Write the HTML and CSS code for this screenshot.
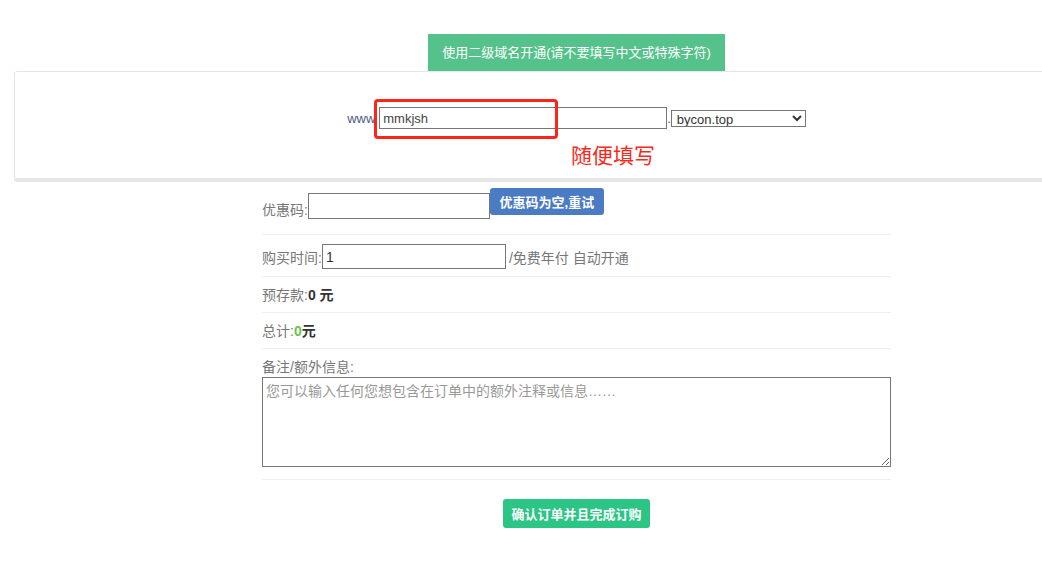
FILE: index.html
```html
<!DOCTYPE html>
<html lang="zh-CN">
<head>
    <meta charset="UTF-8">
    <title>开通</title>
    <link rel="stylesheet" href="styles.css">
</head>
<body>
    <div class="page">
        <div class="domain-tab">使用二级域名开通(请不要填写中文或特殊字符)</div>
        <section class="domain-panel">
            <div class="domain-row">
                <span class="www">www.</span>
                <span class="sub-wrap">
                    <input type="text" class="sub-input" value="mmkjsh">
                    <span class="mark-box"></span>
                </span>
                <span class="dot">.</span>
                <select class="suffix">
                    <option>bycon.top</option>
                </select>
            </div>
            <div class="note">随便填写</div>
        </section>

        <form class="order-form">
            <div class="row row-coupon">
                <label>优惠码:</label>
                <input type="text" class="coupon-input">
                <button type="button" class="btn-blue">优惠码为空,重试</button>
            </div>
            <div class="row">
                <label>购买时间:</label>
                <input type="text" class="time-input" value="1">
                <span class="muted">/免费年付 自动开通</span>
            </div>
            <div class="row row-text">
                <span class="muted">预存款:</span><b>0 元</b>
            </div>
            <div class="row row-text">
                <span class="muted">总计:</span><b><span class="green">0</span>元</b>
            </div>
            <div class="row row-notes">
                <label>备注/额外信息:</label>
                <textarea placeholder="您可以输入任何您想包含在订单中的额外注释或信息……"></textarea>
            </div>
            <div class="submit-wrap">
                <button type="submit" class="btn-green">确认订单并且完成订购</button>
            </div>
        </form>
    </div>
</body>
</html>
```

FILE: styles.css
```css
* {
    box-sizing: border-box;
}

body {
    margin: 0;
    background: #fff;
    overflow: hidden;
    font-family: "Liberation Sans", "Noto Sans CJK SC", sans-serif;
    font-size: 14px;
    color: #777;
}

.page {
    width: 1125px;
    margin-left: 14px;
    padding-top: 34px;
}

/* domain tab + panel */
.domain-tab {
    width: 297px;
    height: 37px;
    margin: 0 auto;
    background: #55c28b;
    color: #fff;
    font-size: 13px;
    line-height: 37px;
    text-align: center;
}

.domain-panel {
    height: 108px;
    border: 1px solid #e6e6e6;
    border-radius: 3px;
    box-shadow: 0 3px 0 #e6e6e6;
    padding-top: 35px;
}

.domain-row {
    display: flex;
    justify-content: center;
    align-items: center;
    font-size: 13px;
}

.www {
    color: #4d5b85;
}

.sub-wrap {
    position: relative;
    display: inline-flex;
}

.sub-input {
    width: 288px;
    height: 22px;
    margin: 0 0 0 1px;
    padding: 0 3px;
    border: 1px solid #767676;
    font-family: inherit;
    font-size: 13px;
    color: #444;
    outline: none;
}

.mark-box {
    position: absolute;
    left: -4px;
    top: -8px;
    width: 184px;
    height: 40px;
    border: 3px solid #ff2418;
    border-radius: 4px;
}

.dot {
    color: #666;
    padding: 0;
}

.suffix {
    width: 135px;
    height: 17px;
    margin: 0;
    padding: 0 0 0 1px;
    border: 1px solid #767676;
    border-radius: 0;
    background: #fff;
    font-family: inherit;
    font-size: 13px;
    line-height: 15px;
    color: #333;
    outline: none;
}

.note {
    margin-top: 16px;
    padding-left: 73px;
    text-align: center;
    color: #f52a1c;
    font-size: 21px;
    line-height: 22px;
}

/* order form */
.order-form {
    width: 629px;
    margin: 0 auto;
    padding-top: 9px;
}

.row {
    display: flex;
    align-items: center;
    border-bottom: 1px solid #eee;
    padding: 9px 0 7px;
}

.row-coupon {
    align-items: flex-start;
    padding: 0 0 15px;
}

.row-coupon label {
    margin-top: 11px;
}

.coupon-input {
    width: 182px;
    height: 26px;
    margin: 5px 0 0;
    border: 1px solid #767676;
    outline: none;
}

.btn-blue {
    height: 27px;
    width: 114px;
    border: none;
    border-radius: 3px;
    background: #4a7bc3;
    color: #fff;
    font-family: inherit;
    font-size: 13px;
    font-weight: bold;
    padding: 0;
}

.time-input {
    width: 184px;
    height: 25px;
    margin: 0 3px 0 0;
    padding: 0 3px;
    border: 1px solid #767676;
    font-family: inherit;
    font-size: 14px;
    color: #333;
    outline: none;
}

.row-text {
    padding: 9px 0 7px;
    line-height: 19px;
}

.row-text b {
    color: #333;
}

.green {
    color: #6cc24a;
}

.row-notes {
    flex-direction: column;
    align-items: stretch;
    padding: 9px 0 12px;
}

.row-notes label {
    line-height: 18px;
}

textarea {
    height: 90px;
    margin: 1px 0 0;
    padding: 2px 3px;
    border: 1px solid #767676;
    font-family: inherit;
    font-size: 14px;
    color: #333;
    outline: none;
}

textarea::placeholder {
    color: #999;
}

.submit-wrap {
    display: flex;
    justify-content: center;
    padding-top: 19px;
}

.btn-green {
    width: 147px;
    height: 29px;
    border: none;
    border-radius: 3px;
    background: #2bc586;
    color: #fff;
    font-family: inherit;
    font-size: 13px;
    font-weight: bold;
    padding: 0;
}
```
